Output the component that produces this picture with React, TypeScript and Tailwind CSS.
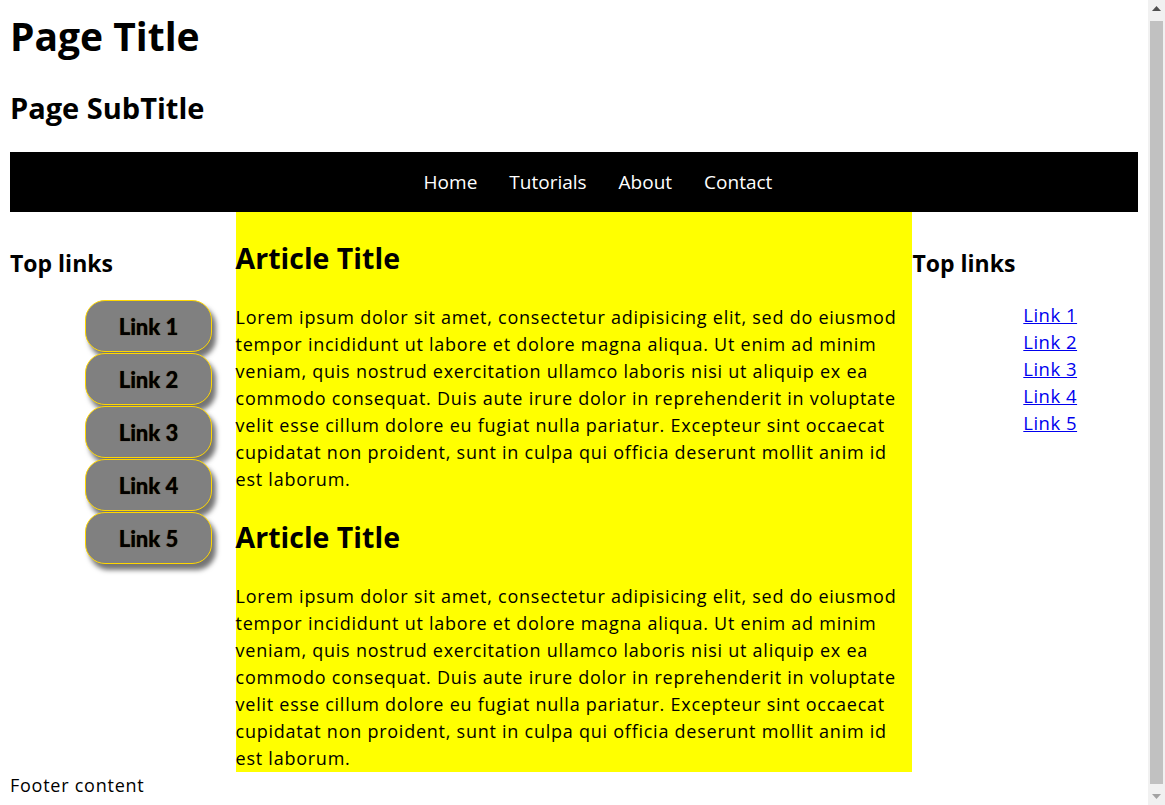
const LOREM =
  'Lorem ipsum dolor sit amet, consectetur adipisicing elit, sed do eiusmod tempor incididunt ut labore et dolore magna aliqua. Ut enim ad minim veniam, quis nostrud exercitation ullamco laboris nisi ut aliquip ex ea commodo consequat. Duis aute irure dolor in reprehenderit in voluptate velit esse cillum dolore eu fugiat nulla pariatur. Excepteur sint occaecat cupidatat non proident, sunt in culpa qui officia deserunt mollit anim id est laborum.'

const NAV = ['Home', 'Tutorials', 'About', 'Contact']
const LINKS = ['Link 1', 'Link 2', 'Link 3', 'Link 4', 'Link 5']

function Scrollbar() {
  return (
    <div className="flex w-[17px] shrink-0 flex-col bg-[#f1f1f1]">
      <div className="flex h-[17px] items-center justify-center">
        <svg width="9" height="5" viewBox="0 0 9 5">
          <path d="M0 5 L4.5 0 L9 5 Z" fill="#505050" />
        </svg>
      </div>
      <div className="mx-[2px] my-[4px] flex-1 bg-[#c1c1c1]" />
      <div className="flex h-[17px] items-center justify-center">
        <svg width="9" height="5" viewBox="0 0 9 5">
          <path d="M0 0 L9 0 L4.5 5 Z" fill="#a3a3a3" />
        </svg>
      </div>
    </div>
  )
}

export default function App() {
  return (
    <div className="flex h-[805px] overflow-hidden bg-white">
      <div className="min-w-0 flex-1 px-[10px] pb-[14px] text-black font-['Open_Sans',sans-serif]">
        <h1 className="pt-[12px] text-[39px] leading-[48px] font-bold">Page Title</h1>
        <h2 className="mt-[30px] text-[29px] leading-[36px] font-bold">Page SubTitle</h2>

        <nav className="mt-[26px] flex h-[60px] items-center justify-center gap-[32px] bg-black pl-[48px] text-[19px] text-white">
          {NAV.map(item => (
            <a key={item} href="#" className="leading-[27px]">
              {item}
            </a>
          ))}
        </nav>

        <div className="grid grid-cols-[20%_60%_20%]">
          <aside className="pt-[37px]">
            <h3 className="text-[23px] leading-[28px] font-bold">Top links</h3>
            <ul className="mt-[23px] flex flex-col gap-[1px] pl-[75px]">
              {LINKS.map(link => (
                <li key={link}>
                  <a
                    href="#"
                    className="flex h-[52px] w-[127px] items-center justify-center rounded-[20px] border border-[#ffd700] bg-[#808080] text-[22px] font-black text-black shadow-[4px_6px_5px_rgba(0,0,0,0.55)] [text-shadow:0_0_1px_#5a3a00] font-['Lato',sans-serif]">
                    {link}
                  </a>
                </li>
              ))}
            </ul>
          </aside>

          <main className="bg-[#ffff00] pt-[28px] text-[18px] leading-[27px] tracking-[0.75px]">
            <h2 className="text-[28.5px] leading-[36px] font-bold tracking-normal">Article Title</h2>
            <p className="mt-[28px]">{LOREM}</p>
            <h2 className="mt-[26px] text-[28.5px] leading-[36px] font-bold tracking-normal">Article Title</h2>
            <p className="mt-[28px]">{LOREM}</p>
          </main>

          <aside className="pt-[37px]">
            <h3 className="text-[23px] leading-[28px] font-bold">Top links</h3>
            <ul className="mt-[24px] pl-[50px] text-center text-[18.5px] leading-[27px] tracking-[0.5px]">
              {LINKS.map(link => (
                <li key={link}>
                  <a href="#" className="text-[#0000ee] underline">
                    {link}
                  </a>
                </li>
              ))}
            </ul>
          </aside>
        </div>

        <footer className="text-[18px] leading-[27px] tracking-[0.75px]">Footer content</footer>
      </div>
      <Scrollbar />
    </div>
  )
}
